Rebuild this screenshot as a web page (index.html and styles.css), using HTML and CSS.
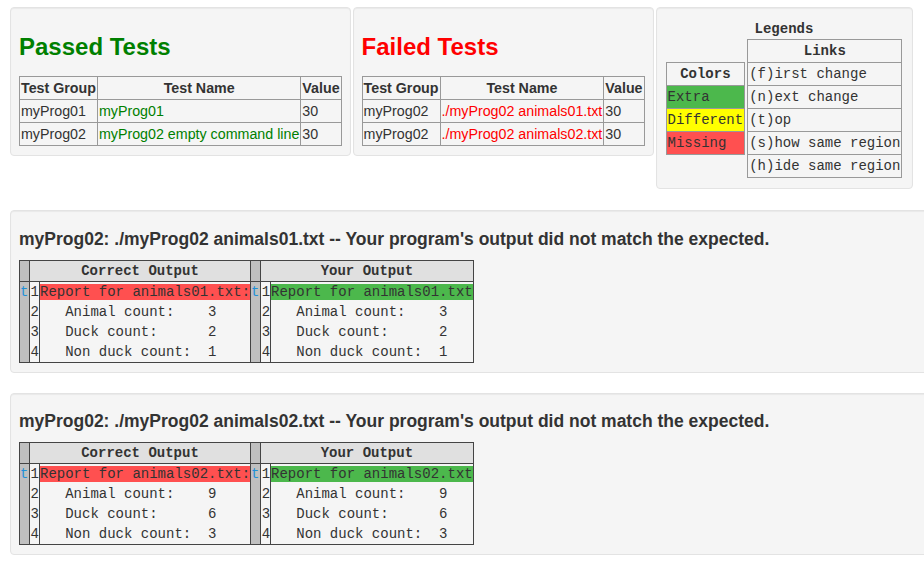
FILE: index.html
```html
<!DOCTYPE html>
<html lang="en">
<head>
<meta charset="utf-8">
<title>Test Results</title>
<link rel="stylesheet" href="styles.css">
</head>
<body>
<div class="page">
  <div class="summary">
    <section class="well result">
      <h2 class="heading passed">Passed Tests</h2>
      <table class="tests">
        <tr><th>Test Group</th><th>Test Name</th><th>Value</th></tr>
        <tr><td>myProg01</td><td class="pass">myProg01</td><td>30</td></tr>
        <tr><td>myProg02</td><td class="pass">myProg02 empty command line</td><td>30</td></tr>
      </table>
    </section>
    <section class="well result">
      <h2 class="heading failed">Failed Tests</h2>
      <table class="tests">
        <tr><th>Test Group</th><th>Test Name</th><th>Value</th></tr>
        <tr><td>myProg02</td><td class="fail">./myProg02 animals01.txt</td><td>30</td></tr>
        <tr><td>myProg02</td><td class="fail">./myProg02 animals02.txt</td><td>30</td></tr>
      </table>
    </section>
    <section class="well legend">
      <div class="legend-title">Legends</div>
      <div class="legend-tables">
        <table class="lg">
          <tr><th>Colors</th></tr>
          <tr><td class="added">Extra</td></tr>
          <tr><td class="changed">Different</td></tr>
          <tr><td class="deleted">Missing</td></tr>
        </table>
        <table class="lg">
          <tr><th>Links</th></tr>
          <tr><td>(f)irst change</td></tr>
          <tr><td>(n)ext change</td></tr>
          <tr><td>(t)op</td></tr>
          <tr><td>(s)how same region</td></tr>
          <tr><td>(h)ide same region</td></tr>
        </table>
      </div>
    </section>
  </div>

  <section class="well diff-well">
    <h3 class="diff-title">myProg02: ./myProg02 animals01.txt -- Your program's output did not match the expected.</h3>
    <table class="diff">
      <tr><th class="next"></th><th colspan="2">Correct Output</th><th class="next"></th><th colspan="2">Your Output</th></tr>
      <tr><td class="next"><a href="#">t</a></td><td class="num">1</td><td class="txt"><span class="sub">Report for animals01.txt:</span></td><td class="next"><a href="#">t</a></td><td class="num">1</td><td class="txt"><span class="add">Report for animals01.txt</span></td></tr>
      <tr><td class="next"></td><td class="num">2</td><td class="txt">   Animal count:    3</td><td class="next"></td><td class="num">2</td><td class="txt">   Animal count:    3</td></tr>
      <tr><td class="next"></td><td class="num">3</td><td class="txt">   Duck count:      2</td><td class="next"></td><td class="num">3</td><td class="txt">   Duck count:      2</td></tr>
      <tr><td class="next"></td><td class="num">4</td><td class="txt">   Non duck count:  1</td><td class="next"></td><td class="num">4</td><td class="txt">   Non duck count:  1</td></tr>
    </table>
  </section>

  <section class="well diff-well">
    <h3 class="diff-title">myProg02: ./myProg02 animals02.txt -- Your program's output did not match the expected.</h3>
    <table class="diff">
      <tr><th class="next"></th><th colspan="2">Correct Output</th><th class="next"></th><th colspan="2">Your Output</th></tr>
      <tr><td class="next"><a href="#">t</a></td><td class="num">1</td><td class="txt"><span class="sub">Report for animals02.txt:</span></td><td class="next"><a href="#">t</a></td><td class="num">1</td><td class="txt"><span class="add">Report for animals02.txt</span></td></tr>
      <tr><td class="next"></td><td class="num">2</td><td class="txt">   Animal count:    9</td><td class="next"></td><td class="num">2</td><td class="txt">   Animal count:    9</td></tr>
      <tr><td class="next"></td><td class="num">3</td><td class="txt">   Duck count:      6</td><td class="next"></td><td class="num">3</td><td class="txt">   Duck count:      6</td></tr>
      <tr><td class="next"></td><td class="num">4</td><td class="txt">   Non duck count:  3</td><td class="next"></td><td class="num">4</td><td class="txt">   Non duck count:  3</td></tr>
    </table>
  </section>
</div>
</body>
</html>
```
FILE: styles.css
```css
html, body {
  margin: 0;
  padding: 0;
  overflow: hidden;
  background: #fff;
}
body {
  font-family: "Liberation Sans", Arial, sans-serif;
  font-size: 14px;
  color: #333;
}
.page {
  padding: 7px 0 0 10px;
}
.summary {
  display: flex;
  align-items: flex-start;
  gap: 2px;
  margin-bottom: 21px;
}
.well {
  background: #f5f5f5;
  border: 1px solid #e3e3e3;
  border-radius: 4px;
  box-shadow: inset 0 1px 1px rgba(0, 0, 0, 0.05);
}
.result {
  padding: 8px 8px 9px 8px;
}
.heading {
  font-size: 24px;
  line-height: 26px;
  font-weight: bold;
  margin: 18px 0 16px;
}
.passed { color: #008000; }
.failed { color: #ff0000; }

table.tests {
  border-collapse: collapse;
  border: 1px solid #333;
  line-height: 20px;
  font-size: 14.25px;
}
table.tests th,
table.tests td {
  border: 1px solid #999;
  padding: 1px;
  white-space: nowrap;
  text-align: left;
}
table.tests th {
  text-align: center;
  font-weight: bold;
}
.pass { color: #008000; }
.fail { color: #ff0000; }

.legend {
  padding: 8px 10px 10px 9px;
  font-family: "Liberation Mono", "Courier New", monospace;
}
.legend-title {
  text-align: center;
  font-weight: bold;
  line-height: 16px;
  margin: 5px 0 2px;
}
.legend-tables {
  display: flex;
  align-items: center;
  gap: 2px;
}
table.lg {
  border-collapse: collapse;
  border: 1px solid #333;
  line-height: 20px;
}
table.lg th,
table.lg td {
  border: 1px solid #999;
  padding: 1px;
  white-space: pre;
  text-align: left;
}
table.lg th {
  text-align: center;
  font-weight: bold;
}
.added { background: #4cb84c; }
.changed { background: #ffff00; }
.deleted { background: #ff5050; }

.diff-well {
  width: 940px;
  box-sizing: border-box;
  padding: 8px 8px 9px 8px;
  margin-bottom: 20px;
}
.diff-title {
  font-size: 17.5px;
  line-height: 19px;
  font-weight: bold;
  margin: 10.5px 0 11px;
}
table.diff {
  border-collapse: collapse;
  border: 1px solid #444;
  font-family: "Liberation Mono", "Courier New", monospace;
  font-size: 14px;
  line-height: 20px;
}
table.diff th {
  border: 1px solid #444;
  padding: 0;
  background: #e0e0e0;
  font-weight: bold;
  text-align: center;
}
table.diff td {
  border-left: 1px solid #444;
  border-right: 1px solid #444;
  padding: 0;
  white-space: pre;
}
table.diff .next {
  background: #c0c0c0;
  width: 9px;
}
table.diff td.num {
  width: 9px;
  text-align: right;
}
.next a {
  color: #1e90d8;
  text-decoration: none;
}
.sub { background: #ff5050; }
.add { background: #4cb84c; }
```
